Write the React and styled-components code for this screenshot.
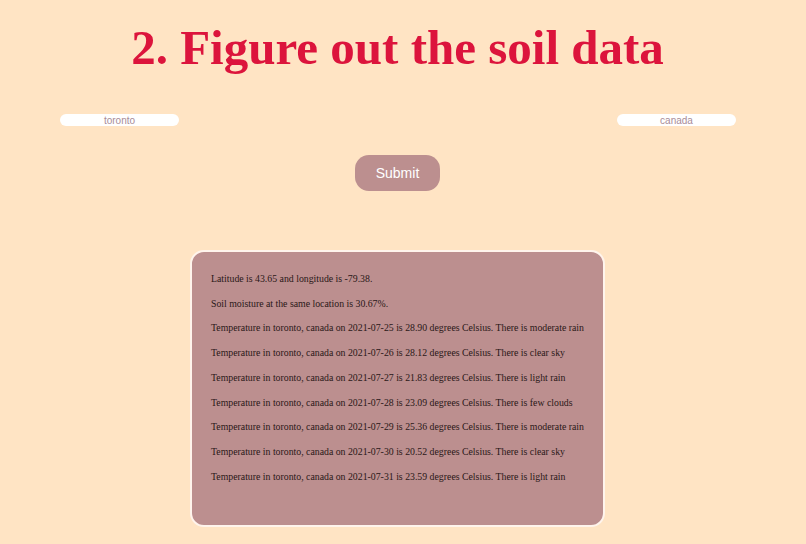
import styled, { createGlobalStyle } from "styled-components";

const GlobalStyle = createGlobalStyle`
  html, body {
    margin: 0;
    background: #FFE4C4;
  }
`;

const days = [
  ["2021-07-25", "28.90", "moderate rain"],
  ["2021-07-26", "28.12", "clear sky"],
  ["2021-07-27", "21.83", "light rain"],
  ["2021-07-28", "23.09", "few clouds"],
  ["2021-07-29", "25.36", "moderate rain"],
  ["2021-07-30", "20.52", "clear sky"],
  ["2021-07-31", "23.59", "light rain"],
];

export default function App() {
  return (
    <Page>
      <GlobalStyle />
      <Title>2. Figure out the soil data</Title>
      <InputRow>
        <Field type="text" placeholder="toronto" defaultValue="" />
        <Field type="text" placeholder="canada" defaultValue="" />
      </InputRow>
      <ButtonRow>
        <SubmitButton>Submit</SubmitButton>
      </ButtonRow>
      <Result>
        <Line>Latitude is 43.65 and longitude is -79.38.</Line>
        <Line>Soil moisture at the same location is 30.67%.</Line>
        {days.map(([date, temp, sky]) => (
          <Line key={date}>
            Temperature in toronto, canada on {date} is {temp} degrees Celsius. There is {sky}
          </Line>
        ))}
      </Result>
    </Page>
  );
}

const Page = styled.div`
  width: 795px;
  height: 544px;
  display: flex;
  flex-direction: column;
  align-items: center;
`;

const Title = styled.h1`
  margin: 20px 0 0 0;
  font-family: "Liberation Serif", serif;
  font-weight: bold;
  font-size: 49px;
  line-height: 56px;
  color: #DC143C;
`;

const InputRow = styled.div`
  align-self: stretch;
  display: flex;
  justify-content: space-between;
  padding: 0 59px 0 60px;
  margin-top: 38px;
`;

const Field = styled.input`
  width: 119px;
  height: 12px;
  box-sizing: border-box;
  border: none;
  border-radius: 6px;
  background: #ffffff;
  padding: 0;
  text-align: center;
  font-family: "Liberation Sans", Arial, sans-serif;
  font-size: 10px;
  outline: none;
  &::placeholder {
    color: #A88C98;
  }
`;

const ButtonRow = styled.div`
  margin-top: 29px;
`;

const SubmitButton = styled.button`
  width: 85px;
  height: 36px;
  border: none;
  border-radius: 14px;
  background: #BC8F8F;
  color: #ffffff;
  font-family: "Liberation Sans", Arial, sans-serif;
  font-size: 14px;
`;

const Result = styled.div`
  margin-top: 59px;
  width: 415px;
  height: 277px;
  box-sizing: border-box;
  padding: 15px 12px 14px 19px;
  background: #BC8F8F;
  border: 2px solid #FFF4EC;
  border-radius: 14px;
  display: flex;
  flex-direction: column;
`;

const Line = styled.p`
  margin: 0;
  font-family: "Liberation Serif", serif;
  font-size: 9.8px;
  line-height: 24.7px;
  white-space: nowrap;
  color: #2A1717;
`;
